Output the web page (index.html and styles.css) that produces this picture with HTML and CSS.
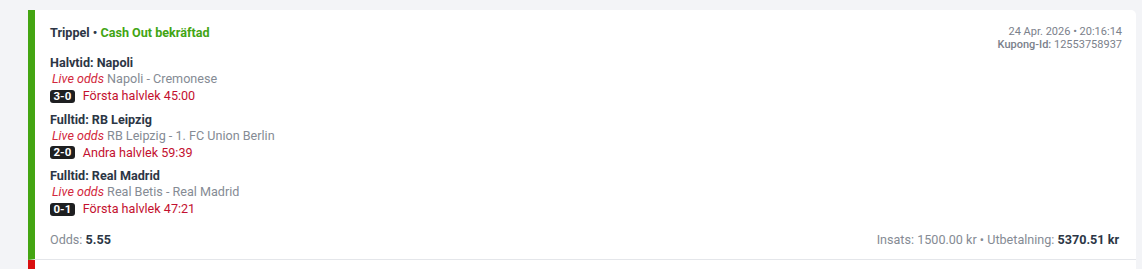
FILE: index.html
```html
<!DOCTYPE html>
<html lang="sv">
<head>
<meta charset="utf-8">
<title>Kuponger</title>
<link rel="stylesheet" href="styles.css">
</head>
<body>
<div class="list">
  <div class="card card-won">
    <div class="head">
      <div class="title"><span class="type">Trippel</span> • <span class="status">Cash Out bekräftad</span></div>
      <div class="meta">
        <div>24 Apr. 2026 • 20:16:14</div>
        <div><span class="meta-label">Kupong-Id:</span> 12553758937</div>
      </div>
    </div>
    <div class="sels">
      <div class="sel">
        <div class="sel-title">Halvtid: Napoli</div>
        <div class="sel-sub"><span class="live">Live odds</span> Napoli - Cremonese</div>
        <div class="sel-score"><span class="badge">3-0</span><span class="clock">Första halvlek 45:00</span></div>
      </div>
      <div class="sel">
        <div class="sel-title">Fulltid: RB Leipzig</div>
        <div class="sel-sub"><span class="live">Live odds</span> RB Leipzig - 1. FC Union Berlin</div>
        <div class="sel-score"><span class="badge">2-0</span><span class="clock">Andra halvlek 59:39</span></div>
      </div>
      <div class="sel">
        <div class="sel-title">Fulltid: Real Madrid</div>
        <div class="sel-sub"><span class="live">Live odds</span> Real Betis - Real Madrid</div>
        <div class="sel-score"><span class="badge">0-1</span><span class="clock">Första halvlek 47:21</span></div>
      </div>
    </div>
    <div class="foot">
      <div>Odds: <b>5.55</b></div>
      <div class="foot-right">Insats: 1500.00 kr • Utbetalning: <b>5370.51 kr</b></div>
    </div>
  </div>
  <div class="card card-lost"></div>
</div>
</body>
</html>
```

FILE: styles.css
```css
html, body {
  margin: 0;
  padding: 0;
  background: #f3f4f7;
  font-family: Roboto, "Liberation Sans", Arial, sans-serif;
  color: #2b3440;
  overflow: hidden;
}

.list {
  padding: 10px 6px 0 28px;
}

.card {
  background: #ffffff;
  border-left: 7px solid #44a512;
  border-bottom: 1px solid #e4e6ea;
  border-radius: 0 5px 0 0;
  padding: 15px 14px 11px 15px;
}

.card-lost {
  border-left-color: #d90f0f;
  border-bottom: none;
  border-radius: 0;
  height: 60px;
  padding: 0;
}

.head {
  display: flex;
  justify-content: space-between;
  align-items: flex-start;
}

.title {
  font-size: 12.6px;
  line-height: 16px;
  font-weight: 700;
  color: #2c3645;
}

.status {
  color: #42a513;
}

.meta {
  text-align: right;
  font-size: 11px;
  line-height: 13px;
  color: #7b818b;
}

.meta-label {
  font-weight: 500;
}

.sels {
  margin-top: 4px;
  display: flex;
  flex-direction: column;
  gap: 7.5px;
}

.sel {
  font-size: 12.6px;
  line-height: 16px;
}

.sel-title {
  font-weight: 700;
  color: #2c3645;
}

.sel-sub {
  color: #858b94;
}

.live {
  font-style: italic;
  color: #d2283c;
  padding-left: 2px;
}

.sel-score {
  display: flex;
  align-items: center;
  gap: 8px;
  height: 16px;
  padding-top: 1px;
}

.badge {
  background: #1e1f21;
  color: #ffffff;
  font-weight: 700;
  font-size: 11.5px;
  line-height: 13px;
  border-radius: 3px;
  padding: 0 3.5px;
}

.clock {
  color: #c3102f;
}

.foot {
  margin-top: 15px;
  display: flex;
  justify-content: space-between;
  font-size: 12.6px;
  line-height: 16px;
  color: #858b94;
}

.foot b {
  color: #2c3645;
  font-weight: 700;
}

.foot-right {
  padding-right: 3px;
}
```
